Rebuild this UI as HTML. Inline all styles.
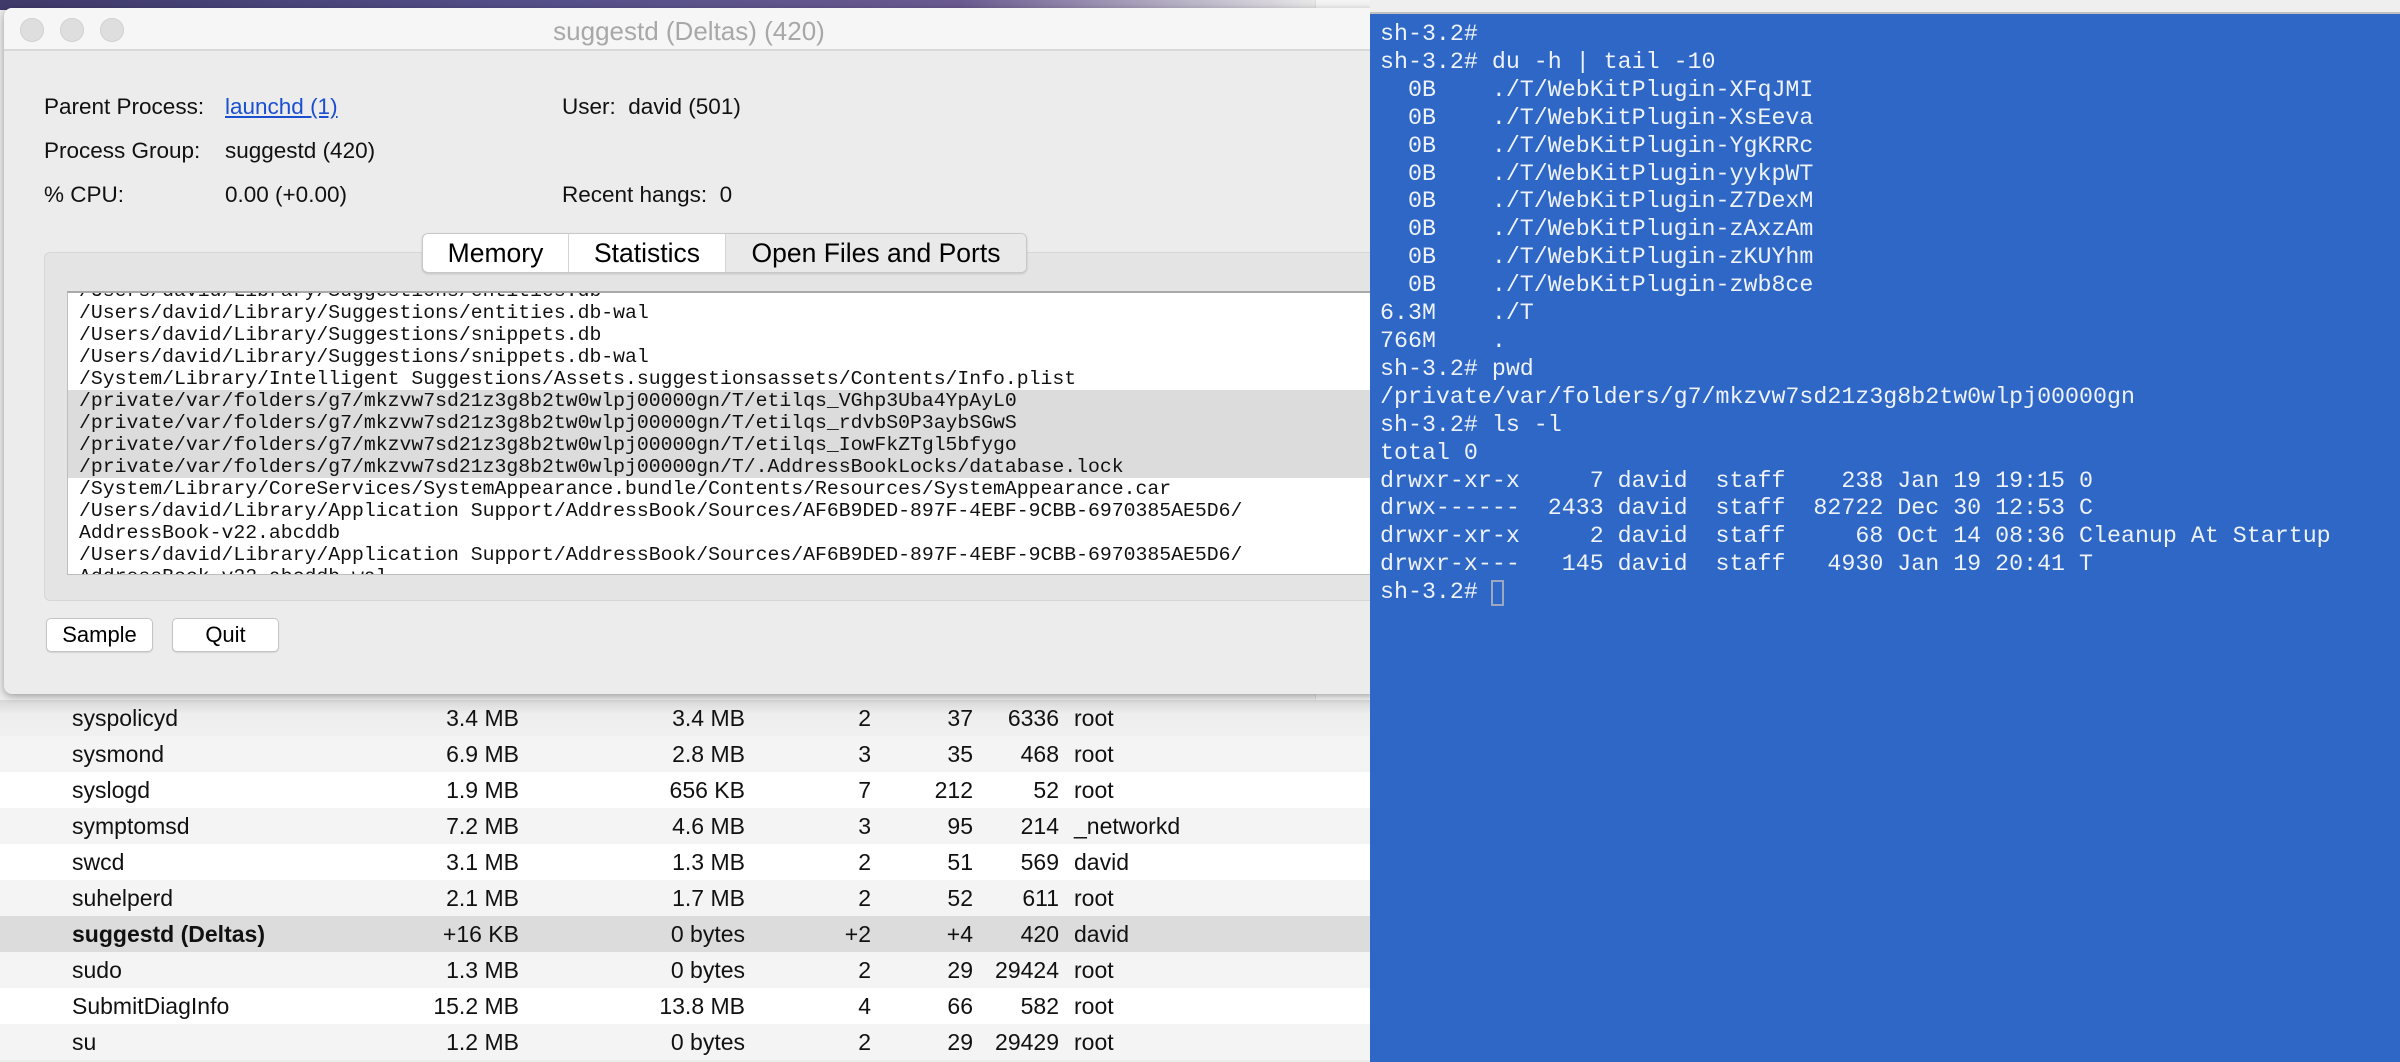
<!DOCTYPE html>
<html><head><meta charset="utf-8"><style>
*{margin:0;padding:0;box-sizing:border-box}
body{width:2400px;height:1062px;overflow:hidden;position:relative;background:#ececec;font-family:"Liberation Sans",sans-serif}
.abs{position:absolute}
.desk{left:0;top:0;width:1370px;height:10px;background:linear-gradient(90deg,#3f3a6a,#55508a 40%,#6a5a90 70%,#e8e8e8 96%)}
.win{left:4px;top:8px;width:1370px;height:686px;background:#ececec;border-radius:8px 0 0 8px;box-shadow:0 2px 8px rgba(0,0,0,.35)}
.tb{left:0;top:0;width:100%;height:43px;background:#f6f6f6;border-bottom:2px solid #d8d8d8;border-radius:8px 0 0 0}
.tl{width:24px;height:24px;border-radius:50%;background:#dedede;border:1px solid #d0d0d0;top:10px}
.title{left:0;width:1370px;top:8px;text-align:center;color:#a8a8a8;font-size:26px}
.lbl{font-size:22.5px;color:#111;line-height:24px}
.tabs{left:418px;top:225px;width:605px;height:40px;background:#fff;border:1px solid #c8c8c8;border-radius:6px;box-shadow:0 1px 2px rgba(0,0,0,.15);display:flex;font-size:26.5px;overflow:hidden;z-index:2}
.tabs div{height:100%;line-height:38px;text-align:center}
.grp{left:40px;top:244px;width:1340px;height:349px;background:#e4e4e4;border:1px solid #d6d6d6;border-radius:6px}
.ta{left:63px;top:283px;width:1310px;height:284px;background:#fff;border:1px solid #bdbdbd;border-top:2px solid #aaa;overflow:hidden}
.ta pre{font-family:"Liberation Mono",monospace;font-size:19.8px;line-height:22px;color:#111;margin-top:-13px;padding-left:11px}
.hl{background:#dcdcdc;display:block;margin-left:-11px;padding-left:11px}
.btn{height:34px;background:#fff;border:1px solid #c4c4c4;border-radius:5px;font-size:22px;text-align:center;line-height:32px;box-shadow:0 1px 1px rgba(0,0,0,.1)}
.rows{left:0;top:700px;width:1370px}
.row{height:36px;position:relative;font-size:23px;color:#111;line-height:36px}
.row span{position:absolute}
.r{text-align:right}
.term{left:1370px;top:0;width:1030px;height:1062px;background:#2e67c6}
.ttb{left:0;top:0;width:100%;height:14px;background:#efefef;border-bottom:2px solid #c0c0c0}
.term pre{position:absolute;left:10px;top:21px;font-family:"Liberation Mono",monospace;font-size:23.3px;line-height:27.9px;color:#eef2fa}
</style></head><body>
<div class="abs desk"></div>
<div class="abs" style="left:1315px;top:0;width:55px;height:700px;background:#f4f4f4;border-left:1px solid #ddd"></div>
<div class="abs rows">
<div class="row" style="background:linear-gradient(#d8d8d8,#eeeeee 40%,#f0f0f0)"><span style="left:72px">syspolicyd</span><span class="r" style="right:851px">3.4 MB</span><span class="r" style="right:625px">3.4 MB</span><span class="r" style="right:499px">2</span><span class="r" style="right:397px">37</span><span class="r" style="right:311px">6336</span><span style="left:1074px">root</span></div>
<div class="row" style="background:#f4f4f4"><span style="left:72px">sysmond</span><span class="r" style="right:851px">6.9 MB</span><span class="r" style="right:625px">2.8 MB</span><span class="r" style="right:499px">3</span><span class="r" style="right:397px">35</span><span class="r" style="right:311px">468</span><span style="left:1074px">root</span></div>
<div class="row" style="background:#fff"><span style="left:72px">syslogd</span><span class="r" style="right:851px">1.9 MB</span><span class="r" style="right:625px">656 KB</span><span class="r" style="right:499px">7</span><span class="r" style="right:397px">212</span><span class="r" style="right:311px">52</span><span style="left:1074px">root</span></div>
<div class="row" style="background:#f4f4f4"><span style="left:72px">symptomsd</span><span class="r" style="right:851px">7.2 MB</span><span class="r" style="right:625px">4.6 MB</span><span class="r" style="right:499px">3</span><span class="r" style="right:397px">95</span><span class="r" style="right:311px">214</span><span style="left:1074px">_networkd</span></div>
<div class="row" style="background:#fff"><span style="left:72px">swcd</span><span class="r" style="right:851px">3.1 MB</span><span class="r" style="right:625px">1.3 MB</span><span class="r" style="right:499px">2</span><span class="r" style="right:397px">51</span><span class="r" style="right:311px">569</span><span style="left:1074px">david</span></div>
<div class="row" style="background:#f4f4f4"><span style="left:72px">suhelperd</span><span class="r" style="right:851px">2.1 MB</span><span class="r" style="right:625px">1.7 MB</span><span class="r" style="right:499px">2</span><span class="r" style="right:397px">52</span><span class="r" style="right:311px">611</span><span style="left:1074px">root</span></div>
<div class="row" style="background:#dcdcdc"><span style="left:72px;font-weight:bold">suggestd (Deltas)</span><span class="r" style="right:851px">+16 KB</span><span class="r" style="right:625px">0 bytes</span><span class="r" style="right:499px">+2</span><span class="r" style="right:397px">+4</span><span class="r" style="right:311px">420</span><span style="left:1074px">david</span></div>
<div class="row" style="background:#f4f4f4"><span style="left:72px">sudo</span><span class="r" style="right:851px">1.3 MB</span><span class="r" style="right:625px">0 bytes</span><span class="r" style="right:499px">2</span><span class="r" style="right:397px">29</span><span class="r" style="right:311px">29424</span><span style="left:1074px">root</span></div>
<div class="row" style="background:#fff"><span style="left:72px">SubmitDiagInfo</span><span class="r" style="right:851px">15.2 MB</span><span class="r" style="right:625px">13.8 MB</span><span class="r" style="right:499px">4</span><span class="r" style="right:397px">66</span><span class="r" style="right:311px">582</span><span style="left:1074px">root</span></div>
<div class="row" style="background:#f4f4f4"><span style="left:72px">su</span><span class="r" style="right:851px">1.2 MB</span><span class="r" style="right:625px">0 bytes</span><span class="r" style="right:499px">2</span><span class="r" style="right:397px">29</span><span class="r" style="right:311px">29429</span><span style="left:1074px">root</span></div>
</div>
<div class="abs win">
 <div class="abs tb"></div>
 <div class="abs tl" style="left:16px"></div><div class="abs tl" style="left:56px"></div><div class="abs tl" style="left:96px"></div>
 <div class="abs title">suggestd (Deltas) (420)</div>
 <div class="abs lbl" style="left:40px;top:87px">Parent Process:</div>
 <div class="abs lbl" style="left:221px;top:87px;color:#1a4fd0;text-decoration:underline">launchd (1)</div>
 <div class="abs lbl" style="left:558px;top:87px">User:&nbsp; david (501)</div>
 <div class="abs lbl" style="left:40px;top:131px">Process Group:</div>
 <div class="abs lbl" style="left:221px;top:131px">suggestd (420)</div>
 <div class="abs lbl" style="left:40px;top:175px">% CPU:</div>
 <div class="abs lbl" style="left:221px;top:175px">0.00 (+0.00)</div>
 <div class="abs lbl" style="left:558px;top:175px">Recent hangs:&nbsp; 0</div>
 <div class="abs grp"></div>
 <div class="abs tabs"><div style="width:146px;border-right:1px solid #d4d4d4">Memory</div><div style="width:157px;border-right:1px solid #d4d4d4">Statistics</div><div style="flex:1;background:#e9e9e9">Open Files and Ports</div></div>
 <div class="abs ta"><pre>/Users/david/Library/Suggestions/entities.db
/Users/david/Library/Suggestions/entities.db-wal
/Users/david/Library/Suggestions/snippets.db
/Users/david/Library/Suggestions/snippets.db-wal
/System/Library/Intelligent Suggestions/Assets.suggestionsassets/Contents/Info.plist
<span class="hl">/private/var/folders/g7/mkzvw7sd21z3g8b2tw0wlpj00000gn/T/etilqs_VGhp3Uba4YpAyL0</span><span class="hl">/private/var/folders/g7/mkzvw7sd21z3g8b2tw0wlpj00000gn/T/etilqs_rdvbS0P3aybSGwS</span><span class="hl">/private/var/folders/g7/mkzvw7sd21z3g8b2tw0wlpj00000gn/T/etilqs_IowFkZTgl5bfygo</span><span class="hl">/private/var/folders/g7/mkzvw7sd21z3g8b2tw0wlpj00000gn/T/.AddressBookLocks/database.lock</span>/System/Library/CoreServices/SystemAppearance.bundle/Contents/Resources/SystemAppearance.car
/Users/david/Library/Application Support/AddressBook/Sources/AF6B9DED-897F-4EBF-9CBB-6970385AE5D6/
AddressBook-v22.abcddb
/Users/david/Library/Application Support/AddressBook/Sources/AF6B9DED-897F-4EBF-9CBB-6970385AE5D6/
AddressBook-v22.abcddb-wal</pre></div>
 <div class="abs btn" style="left:42px;top:610px;width:107px">Sample</div>
 <div class="abs btn" style="left:168px;top:610px;width:107px">Quit</div>
</div>
<div class="abs term">
 <div class="abs ttb"></div>
<pre>sh-3.2#
sh-3.2# du -h | tail -10
  0B    ./T/WebKitPlugin-XFqJMI
  0B    ./T/WebKitPlugin-XsEeva
  0B    ./T/WebKitPlugin-YgKRRc
  0B    ./T/WebKitPlugin-yykpWT
  0B    ./T/WebKitPlugin-Z7DexM
  0B    ./T/WebKitPlugin-zAxzAm
  0B    ./T/WebKitPlugin-zKUYhm
  0B    ./T/WebKitPlugin-zwb8ce
6.3M    ./T
766M    .
sh-3.2# pwd
/private/var/folders/g7/mkzvw7sd21z3g8b2tw0wlpj00000gn
sh-3.2# ls -l
total 0
drwxr-xr-x     7 david  staff    238 Jan 19 19:15 0
drwx------  2433 david  staff  82722 Dec 30 12:53 C
drwxr-xr-x     2 david  staff     68 Oct 14 08:36 Cleanup At Startup
drwxr-x---   145 david  staff   4930 Jan 19 20:41 T
sh-3.2# </pre>
 <div class="abs" style="left:121px;top:580px;width:13px;height:26px;border:2px solid #9aa8c0"></div>
</div>
</body></html>
